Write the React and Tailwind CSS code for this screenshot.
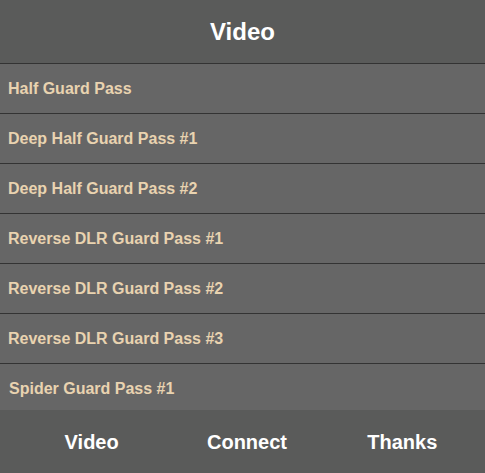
const ITEMS = [
  'Half Guard Pass',
  'Deep Half Guard Pass #1',
  'Deep Half Guard Pass #2',
  'Reverse DLR Guard Pass #1',
  'Reverse DLR Guard Pass #2',
  'Reverse DLR Guard Pass #3',
  'Spider Guard Pass #1',
]

const TABS = ['Video', 'Connect', 'Thanks']

function App() {
  return (
    <div className="w-[485px] h-[473px] flex flex-col overflow-hidden bg-[#666666] font-['Liberation_Sans',Arial,sans-serif]">
      <header className="h-[64px] shrink-0 flex items-center justify-center bg-[#5a5b5a] border-b border-[#333333]">
        <h1 className="text-[24px] font-bold text-white">Video</h1>
      </header>

      <ul className="flex-1 overflow-hidden">
        {ITEMS.map((item, i) => (
          <li
            key={item}
            className={`h-[50px] flex items-center text-[16px] font-bold text-[#e9d3b0] ${
              i < ITEMS.length - 1 ? 'border-b border-[#333333] pl-[8px]' : 'pl-[9px]'
            }`}
          >
            {item}
          </li>
        ))}
      </ul>

      <nav className="h-[63px] shrink-0 grid grid-cols-3 items-center bg-[#5a5b5a] pl-[14px] pr-[5px]">
        {TABS.map((tab) => (
          <span key={tab} className="text-center text-[20px] font-bold text-white">
            {tab}
          </span>
        ))}
      </nav>
    </div>
  )
}

export default App
